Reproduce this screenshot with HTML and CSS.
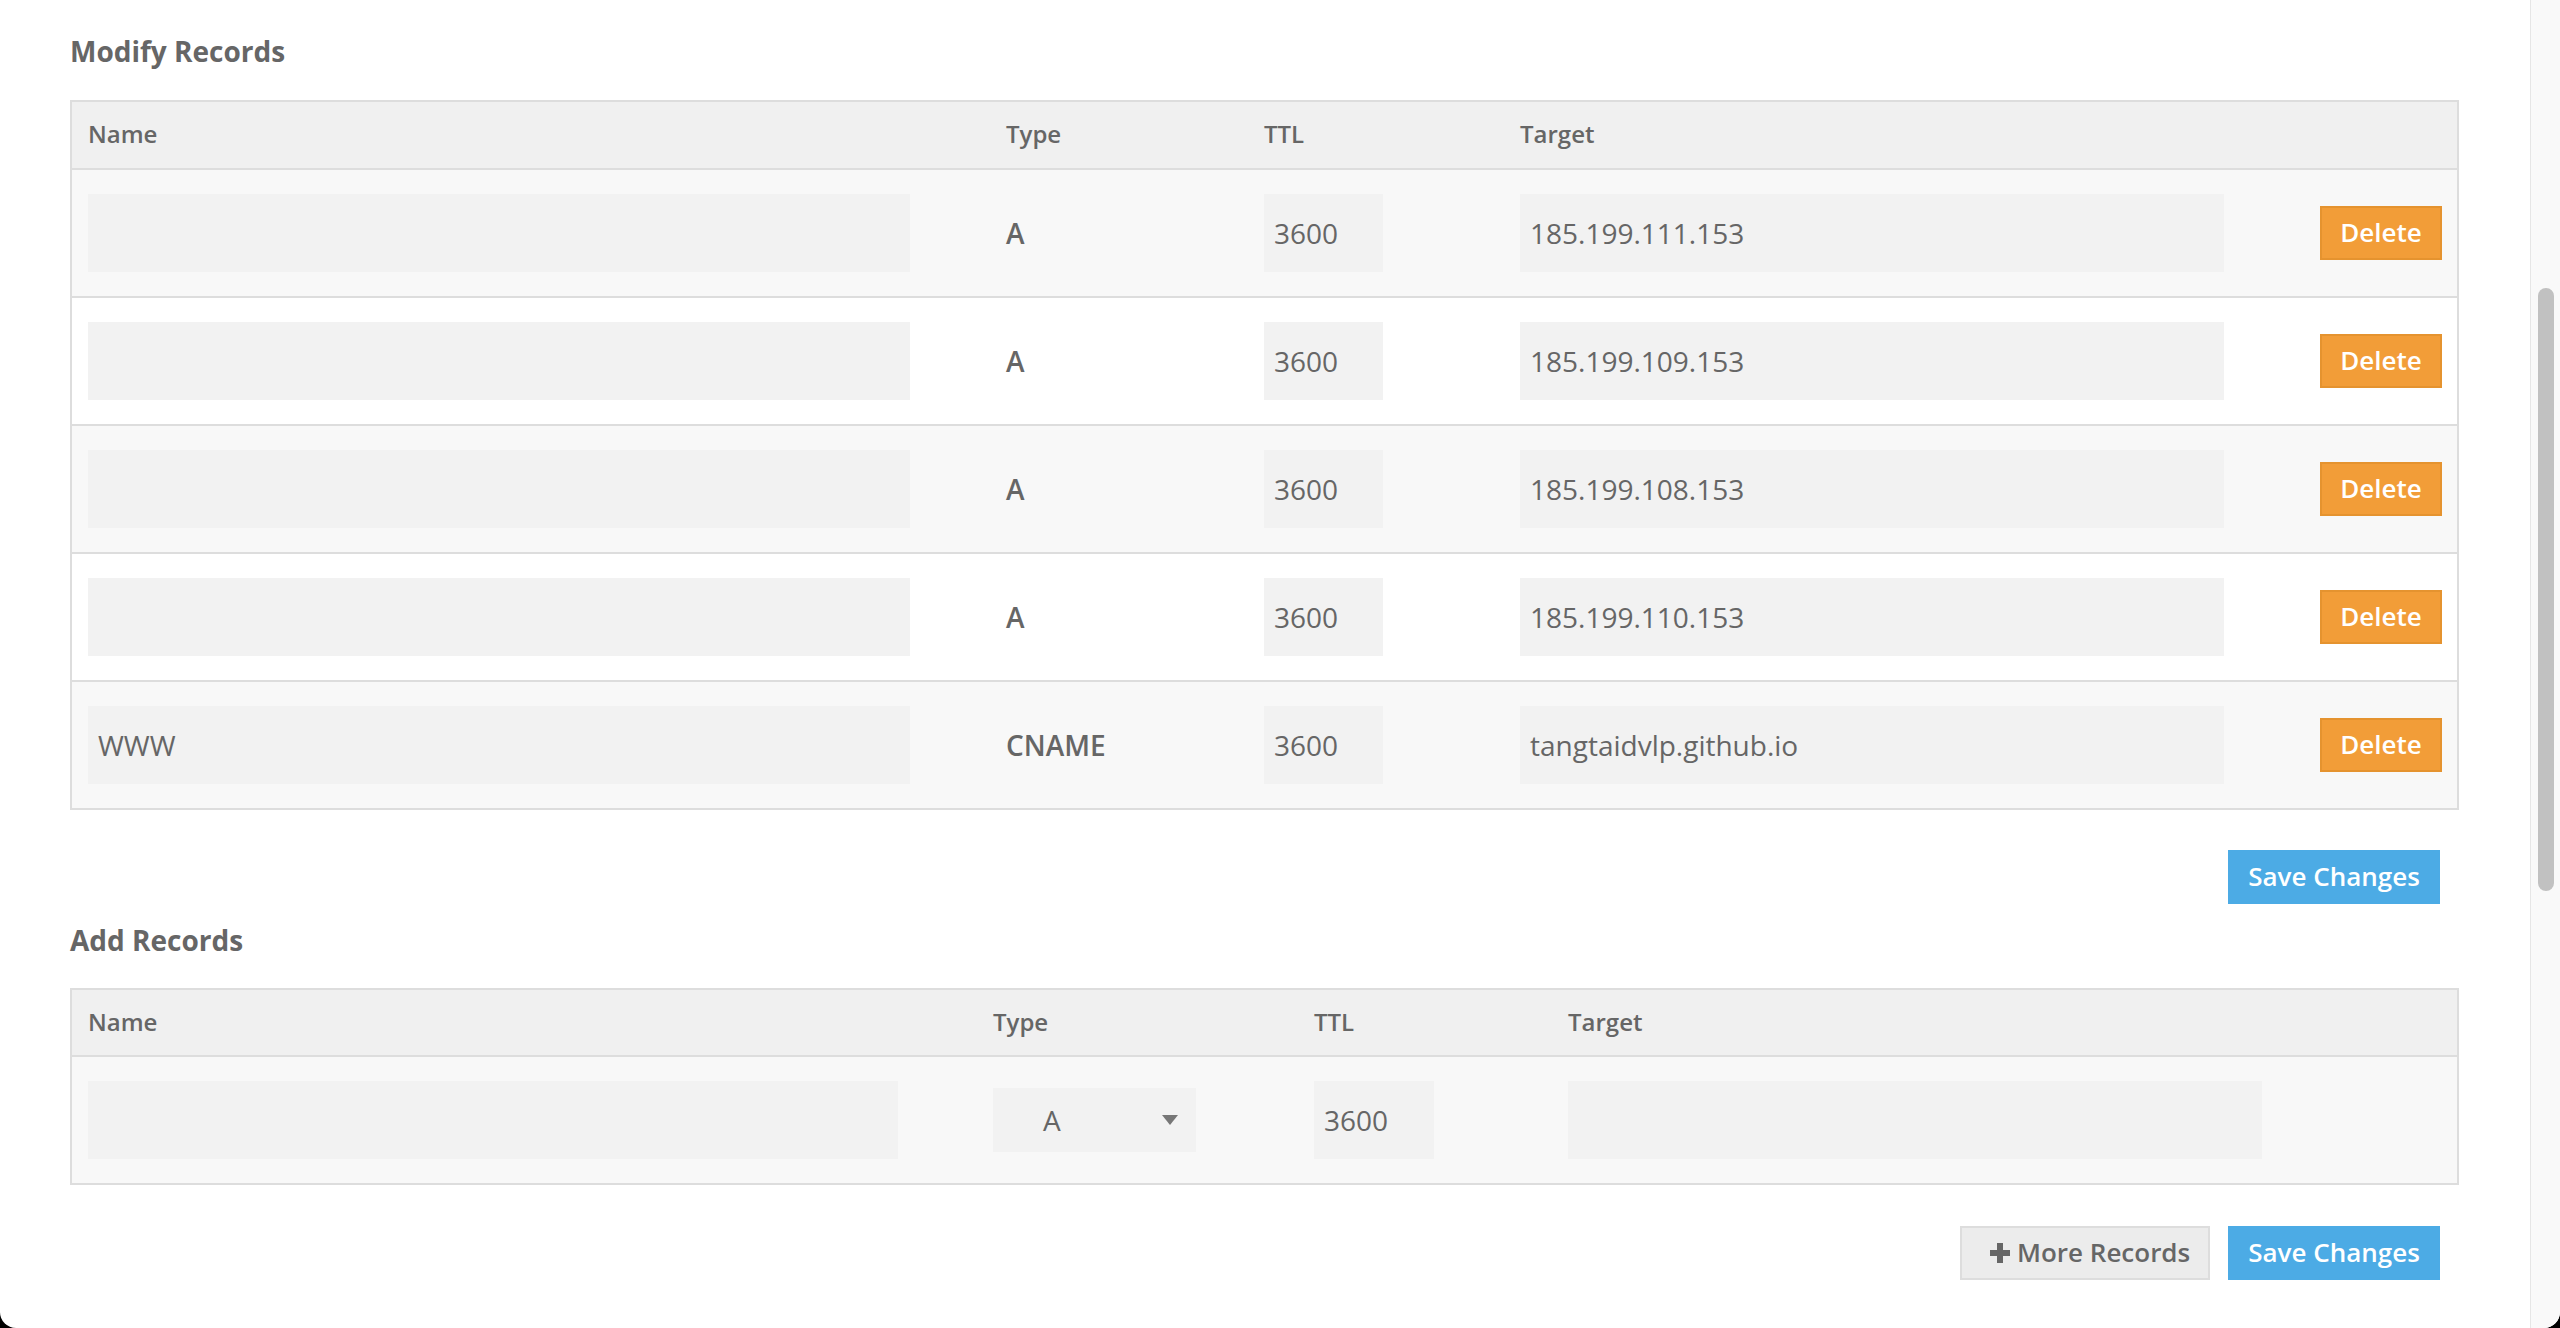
FILE: index.html
```html
<!DOCTYPE html>
<html lang="en">
<head>
<meta charset="utf-8">
<title>DNS Records</title>
<link rel="stylesheet" href="styles.css">
</head>
<body>
<div class="window">
  <main class="content">
    <h2 class="section-title first">Modify Records</h2>
    <div class="records-table">
      <div class="row head modify-cols">
        <div>Name</div><div class="type-head">Type</div><div>TTL</div><div>Target</div><div></div>
      </div>
      <div class="row body odd modify-cols">
        <div><div class="field name-field"></div></div>
        <div class="type">A</div>
        <div><div class="field ttl-field">3600</div></div>
        <div><div class="field target-field">185.199.111.153</div></div>
        <div><button class="btn btn-delete">Delete</button></div>
      </div>
      <div class="row body even modify-cols">
        <div><div class="field name-field"></div></div>
        <div class="type">A</div>
        <div><div class="field ttl-field">3600</div></div>
        <div><div class="field target-field">185.199.109.153</div></div>
        <div><button class="btn btn-delete">Delete</button></div>
      </div>
      <div class="row body odd modify-cols">
        <div><div class="field name-field"></div></div>
        <div class="type">A</div>
        <div><div class="field ttl-field">3600</div></div>
        <div><div class="field target-field">185.199.108.153</div></div>
        <div><button class="btn btn-delete">Delete</button></div>
      </div>
      <div class="row body even modify-cols">
        <div><div class="field name-field"></div></div>
        <div class="type">A</div>
        <div><div class="field ttl-field">3600</div></div>
        <div><div class="field target-field">185.199.110.153</div></div>
        <div><button class="btn btn-delete">Delete</button></div>
      </div>
      <div class="row body odd last modify-cols">
        <div><div class="field name-field">WWW</div></div>
        <div class="type">CNAME</div>
        <div><div class="field ttl-field">3600</div></div>
        <div><div class="field target-field">tangtaidvlp.github.io</div></div>
        <div><button class="btn btn-delete">Delete</button></div>
      </div>
    </div>
    <div class="actions first-actions">
      <button class="btn btn-save">Save Changes</button>
    </div>

    <h2 class="section-title second">Add Records</h2>
    <div class="records-table">
      <div class="row head head-add add-cols">
        <div>Name</div><div>Type</div><div>TTL</div><div>Target</div>
      </div>
      <div class="row body odd last add-cols">
        <div><div class="field add-name"></div></div>
        <div>
          <div class="select">
            <span>A</span>
            <svg class="caret" width="16" height="10" viewBox="0 0 16 10"><path d="M0 0H16L8 10Z" fill="#777"/></svg>
          </div>
        </div>
        <div><div class="field add-ttl">3600</div></div>
        <div><div class="field add-target"></div></div>
      </div>
    </div>
    <div class="actions second-actions">
      <button class="btn btn-more">
        <svg class="plus" width="20" height="20" viewBox="0 0 20 20"><path d="M7 0H13V7H20V13H13V20H7V13H0V7H7Z" fill="#666"/></svg>
        <span>More Records</span>
      </button>
      <button class="btn btn-save">Save Changes</button>
    </div>
  </main>
  <aside class="scrollbar">
    <div class="thumb"></div>
  </aside>
</div>
</body>
</html>
```
FILE: styles.css
```css
* { box-sizing: border-box; }
html, body { margin: 0; padding: 0; }
body {
  background: #000;
  font-family: "Open Sans", "Noto Sans", "Liberation Sans", sans-serif;
  color: #666;
}
.window {
  width: 2560px;
  height: 1328px;
  background: #fff;
  border-radius: 0 0 16px 16px;
  overflow: hidden;
  display: flex;
}
.content {
  flex: 1;
  padding: 0 71px 0 70px;
}
.section-title {
  margin: 0;
  font-size: 28px;
  font-weight: 700;
  line-height: 38px;
  color: #666;
}
.section-title.first { margin-top: 32px; margin-bottom: 30px; }
.section-title.second { margin-top: 17px; margin-bottom: 29px; }

.records-table {
  border: 2px solid #dddddd;
}
.row {
  display: grid;
  align-items: center;
  padding: 0 15px 0 16px;
}
.modify-cols { grid-template-columns: 917px 259px 256px 1fr auto; }
.add-cols { grid-template-columns: 905px 321px 254px 1fr; }
.row.head {
  height: 68px;
  background: #f0f0f0;
  border-bottom: 2px solid #dddddd;
  font-size: 24px;
  font-weight: 600;
  padding-bottom: 3px;
}
.type-head { padding-left: 1px; }
.row.head.head-add { height: 67px; }
.row.body {
  height: 128px;
  border-bottom: 2px solid #dddddd;
}
.row.body.last { height: 126px; border-bottom: none; }
.row.odd { background: #f8f8f8; }
.row.even { background: #fff; }

.field {
  height: 78px;
  background: #f2f2f2;
  font-size: 28px;
  line-height: 78px;
  padding-left: 10px;
  color: #666;
  white-space: nowrap;
}
.name-field { width: 822px; }
.ttl-field { width: 119px; }
.target-field { width: 704px; }
.add-name { width: 810px; }
.add-ttl { width: 120px; }
.add-target { width: 694px; }

.type {
  font-size: 28px;
  font-weight: 600;
  padding-left: 1px;
}

.select {
  width: 203px;
  height: 64px;
  background: #f2f2f2;
  display: flex;
  align-items: center;
  justify-content: space-between;
  padding: 0 18px 0 50px;
  font-size: 28px;
}

.btn {
  font-family: "Open Sans", "Noto Sans", "Liberation Sans", sans-serif;
  font-size: 26px;
  font-weight: 600;
  height: 54px;
  border: 2px solid transparent;
  padding: 0 0 3px;
  cursor: pointer;
  display: inline-flex;
  align-items: center;
  justify-content: center;
}
.btn-delete {
  width: 122px;
  background: #f29d38;
  border-color: #e5932f;
  color: #fff;
}
.btn-save {
  width: 212px;
  background: #4cabe5;
  border-color: #4cabe5;
  color: #fff;
}
.btn-more {
  width: 250px;
  background: #ececec;
  border-color: #dddddd;
  color: #666;
  justify-content: flex-start;
  padding-left: 28px;
  gap: 7px;
}
.plus { margin-top: 3px; }
.actions {
  display: flex;
  justify-content: flex-end;
  gap: 18px;
  padding-right: 19px;
}
.first-actions { margin-top: 40px; }
.second-actions { margin-top: 41px; }

.scrollbar {
  width: 30px;
  background: #f9f9f9;
  border-left: 1px solid #e6e6e6;
  padding: 288px 0 0 7px;
}
.thumb {
  width: 16px;
  height: 603px;
  border-radius: 8px;
  background: #c1c1c1;
}
```
